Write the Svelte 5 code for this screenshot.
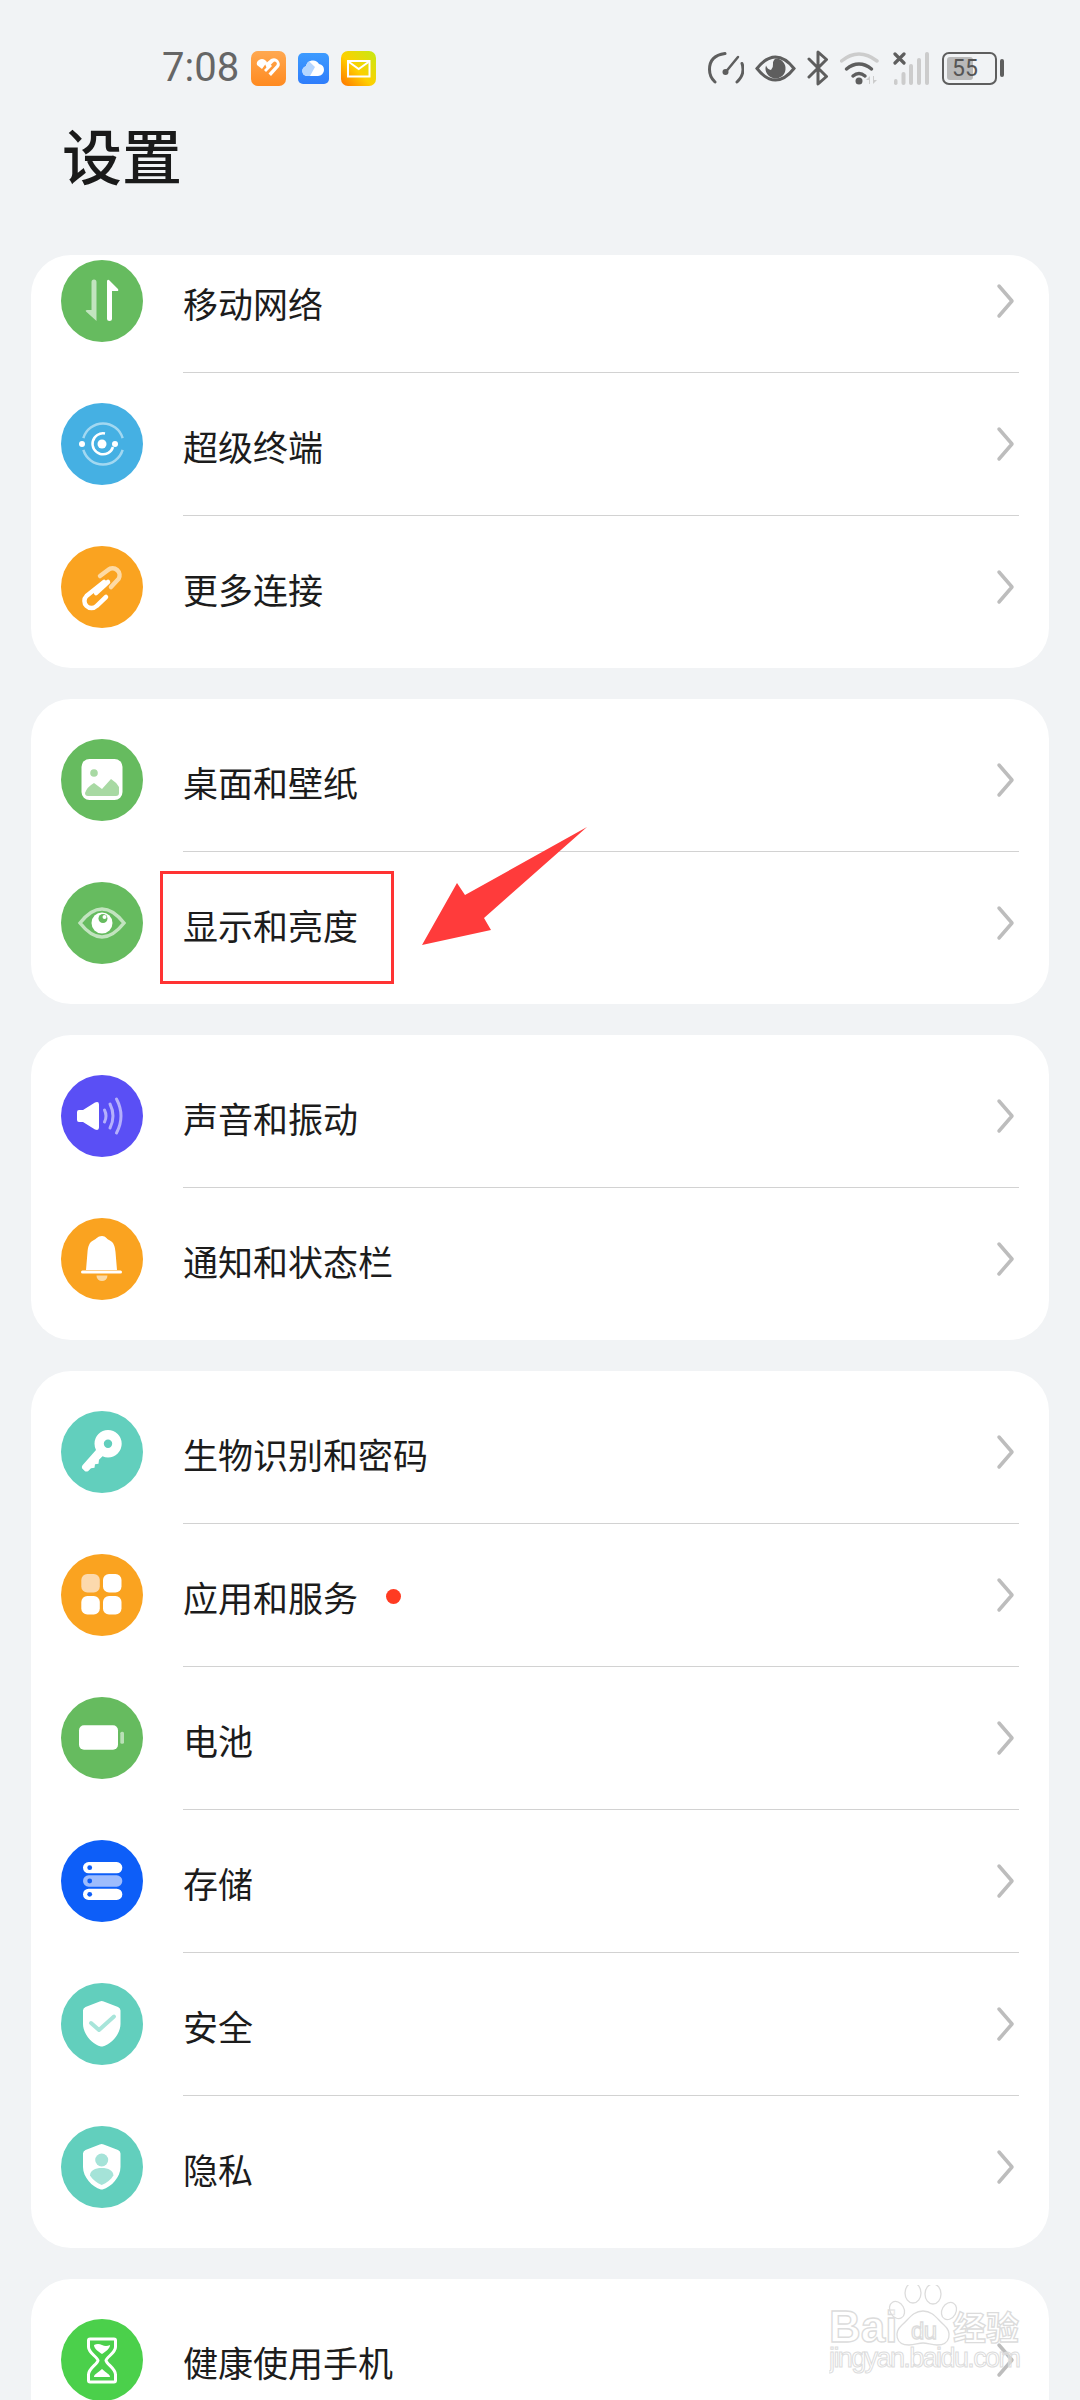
<script lang="ts">
    const green = "#66bb5f";
    const teal = "#62cfbd";
    const orange = "#faa320";

    const groups = [
        [
            { label: "移动网络", icon: "mobile", color: green },
            { label: "超级终端", icon: "terminal", color: "#45b0e3" },
            { label: "更多连接", icon: "link", color: orange },
        ],
        [
            { label: "桌面和壁纸", icon: "wallpaper", color: green },
            { label: "显示和亮度", icon: "eye", color: green },
        ],
        [
            { label: "声音和振动", icon: "sound", color: "#5a4ff5" },
            { label: "通知和状态栏", icon: "bell", color: orange },
        ],
        [
            { label: "生物识别和密码", icon: "key", color: teal },
            { label: "应用和服务", icon: "apps", color: orange, dot: true },
            { label: "电池", icon: "battery", color: green },
            { label: "存储", icon: "storage", color: "#0d5ef8" },
            { label: "安全", icon: "shield", color: teal },
            { label: "隐私", icon: "privacy", color: teal },
        ],
        [{ label: "健康使用手机", icon: "hourglass", color: "#4bd04b" }],
    ];
</script>

{#snippet glyph(name: string, color: string)}
    <svg class="glyph" viewBox="0 0 82 82">
        {#if name === "mobile"}
            <path d="M30.5 22q0-2.500 2.500-2.500t2.500 2.500V61L25 51.500q-1-1.500 1-1.500h4.500z" fill="#fff" opacity=".6" />
            <path d="M46 21.500q0-2.500 2-1.500l9 9q1 2-1 2h-5v28q0 2-2.500 2T46 59z" fill="#fff" />
        {:else if name === "terminal"}
            <circle cx="42" cy="41" r="20.500" fill="none" stroke="#fff" stroke-opacity=".5" stroke-width="2.500" stroke-dasharray="52 12 52 12" stroke-dashoffset="-6" />
            <path d="M44 30.500A10.500 10.500 0 1 0 52 44" fill="none" stroke="#fff" stroke-width="2.500" />
            <circle cx="41" cy="41" r="4.500" fill="#fff" />
            <circle cx="21" cy="41" r="3" fill="#fff" />
            <circle cx="54" cy="41" r="3" fill="#fff" />
        {:else if name === "link"}
            <path d="M43 36 25.500 50a7 7 0 0 0 10 10L45 51" fill="none" stroke="#fff" stroke-width="4.500" stroke-linecap="round" />
            <path d="M39 30l8-6a7 7 0 0 1 10.500 9L50 41" fill="none" stroke="#fff" stroke-opacity=".6" stroke-width="4.500" stroke-linecap="round" />
            <path d="M35 47 47 36" fill="none" stroke="#fff" stroke-width="4.500" stroke-linecap="round" />
        {:else if name === "wallpaper"}
            <rect x="20.500" y="20" width="41" height="41" rx="8" fill="#fff" />
            <circle cx="33" cy="34" r="3.800" fill="#a8d9a3" />
            <path d="M24 54q2-6 9-10l8 6 9-10q5 3 8 8v6q0 3-3 3H27q-3 0-3-3z" fill="#a8d9a3" />
        {:else if name === "eye"}
            <path d="M19 41Q30 27 41 27T63 41Q52 55 41 55T19 41z" fill="none" stroke="#fff" stroke-opacity=".6" stroke-width="3.500" />
            <circle cx="41" cy="41" r="10.500" fill="#fff" />
            <circle cx="42" cy="36.500" r="4.500" fill={color} />
            <circle cx="43.500" cy="35" r="2" fill="#fff" />
        {:else if name === "sound"}
            <path d="M16 37q0-2 2-2h4l12-7.500q4-1.500 4 2v23q0 3.500-4 2L22 47h-4q-2 0-2-2z" fill="#fff" />
            <path d="M43.500 35q3 6 0 12M49 29q6 12 0 24M55.500 24q9 17 0 34" fill="none" stroke="#b5b0fb" stroke-width="3" stroke-linecap="round" />
        {:else if name === "bell"}
            <path d="M41 18c4 0 4.500 3 7 4 5 2 6 7 6.500 12l1.500 18H25l1.500-18c.5-5 1.500-10 6.500-12 2.500-1 3.500-4 8-4z" fill="#fff" />
            <rect x="20" y="52.500" width="41" height="3" rx="1.500" fill="#fff" />
            <path d="M35.500 57.500h11a5.500 5.500 0 0 1-11 0z" fill="#fbd9a4" />
        {:else if name === "key"}
            <path fill-rule="evenodd" d="M47 19a13.700 13.700 0 1 1 0 27.400 13.700 13.700 0 0 1-5.500-1.200L38 48.700l-.5 4-3.500.5-.5 3.500-3.500.5-3 3q-2 .5-3 0l-3-3q-.5-1.500.5-3L35 39q-1.500-3-1.500-6.300A13.700 13.700 0 0 1 47 19zm0 9.500a4.200 4.200 0 1 0 0 8.400 4.200 4.200 0 0 0 0-8.400z" fill="#fff" />
        {:else if name === "apps"}
            <rect x="20.300" y="20" width="18.500" height="18.500" rx="6" fill="#fcd9ad" />
            <rect x="42" y="20" width="18.500" height="18.500" rx="6" fill="#fff" />
            <rect x="20.300" y="42" width="18.500" height="18.500" rx="6" fill="#fff" />
            <rect x="42" y="42" width="18.500" height="18.500" rx="6" fill="#fff" />
        {:else if name === "battery"}
            <rect x="18" y="28.300" width="39" height="24.500" rx="5" fill="#fff" />
            <rect x="59.300" y="34.700" width="3.700" height="12" rx="1.500" fill="#fff" opacity=".55" />
        {:else if name === "storage"}
            <rect x="22" y="22" width="39.300" height="11.300" rx="5.600" fill="#fff" />
            <rect x="22" y="35.300" width="39.300" height="11.400" rx="5.600" fill="#9dbcfd" />
            <rect x="22" y="48.700" width="39.300" height="11.300" rx="5.600" fill="#fff" />
            <circle cx="28.700" cy="27.700" r="2.400" fill={color} />
            <circle cx="28.700" cy="41" r="2.400" fill={color} />
            <circle cx="28.700" cy="54.300" r="2.400" fill={color} />
        {:else if name === "shield"}
            <path d="M40.700 18q1 0 2 .5L57 24q2.500 1 2.500 3.500V41c0 10-9 20-18 22.500h-1.600C31 61 22 51 22 41V27.500q0-2.500 2.500-3.500L38.700 18.500q1-.5 2-.5z" fill="#fff" />
            <path d="M30 40l8 7 15-13.500" fill="none" stroke="#a8e5da" stroke-width="4" stroke-linecap="round" stroke-linejoin="round" />
        {:else if name === "privacy"}
            <path d="M40.700 18q1 0 2 .5L57 24q2.500 1 2.500 3.500V41c0 10-9 20-18 22.500h-1.600C31 61 22 51 22 41V27.500q0-2.500 2.500-3.500L38.700 18.500q1-.5 2-.5z" fill="#fff" />
            <circle cx="40.700" cy="34" r="6.500" fill="#a5e3d8" />
            <path d="M29 49.500c0-5 5-7.500 11.700-7.500s11.700 2.500 11.700 7.500c-2.500 4-6.500 7.500-11.700 9.500-5-2-9-5.500-11.700-9.500z" fill="#a5e3d8" />
        {:else if name === "hourglass"}
            <path d="M29 20h24q1.500 0 1.500 1.500V28c0 6-9 10-9.500 13.500.5 3.500 9.500 8 9.500 14v6q0 1.500-1.500 1.500H29q-1.500 0-1.500-1.500v-6c0-6 9-10.500 9.500-14C36.500 38 27.500 34 27.500 28v-6.500Q27.500 20 29 20z" fill="none" stroke="#fff" stroke-width="3" />
            <path d="M33 26q4-2 8 0t8 0c0 4-5 7-8 9-3-2-8-5-8-9zM33 58c0-3 4-4 8-8 4 4 8 5 8 8z" fill="#fff" />
        {/if}
    </svg>
{/snippet}

<div class="page">
    <div class="status">
        <div class="status-left">
            <span class="time">7:08</span>
            <svg class="notif" viewBox="0 0 35 35">
                <defs><linearGradient id="oa" x1="0" y1="0" x2="0" y2="1"><stop offset="0" stop-color="#ffa850" /><stop offset="1" stop-color="#ff8a20" /></linearGradient></defs>
                <rect width="35" height="35" rx="7" fill="url(#oa)" />
                <path d="M6 14q-1-3 2-5 3-2 6 0l2 2-5 7zM14 13l6-5q4-2 7 1 3 4 1 7l-8 9-2.500-2.500 8-8.500q1-2-.5-3t-3 .5l-6 6z" fill="#fff" />
                <path d="M13 19l6-6 2 2-6 6z" fill="#fff" />
            </svg>
            <svg class="notif small" viewBox="0 0 31 31">
                <defs><linearGradient id="ba" x1="0" y1="0" x2="0" y2="1"><stop offset="0" stop-color="#3d9bff" /><stop offset="1" stop-color="#2f7dfb" /></linearGradient></defs>
                <rect width="31" height="31" rx="5" fill="url(#ba)" />
                <path d="M9 23a5 5 0 0 1-1-9.800 7 7 0 0 1 13-2.200 6 6 0 0 1 5 6 6 6 0 0 1-6 6z" fill="#fff" />
                <path d="M9 23a5 5 0 0 1-1-9.800 7 7 0 0 1 3-5L17 14l-5 9z" fill="#b5d6ff" />
            </svg>
            <svg class="notif" viewBox="0 0 35 35">
                <defs><linearGradient id="ya" x1="1" y1="0" x2="0" y2="1"><stop offset="0" stop-color="#c4ea14" /><stop offset=".55" stop-color="#ffcf00" /><stop offset="1" stop-color="#ff7200" /></linearGradient></defs>
                <rect width="35" height="35" rx="7" fill="url(#ya)" />
                <rect x="7" y="10" width="21.500" height="15.500" fill="none" stroke="#fff" stroke-width="2" />
                <path d="M8 11l9.700 7L27.500 11" fill="none" stroke="#fff" stroke-width="2" />
            </svg>
        </div>
        <div class="status-right">
            <svg class="si" width="36" height="32" viewBox="0 0 36 32" fill="none" stroke="#5e5e5e" stroke-width="3" stroke-linecap="round">
                <path d="M7 30Q1.500 25 1.500 17.500 1.500 3.500 17 1.500" />
                <path d="M34 11.500q1 2.500 1 6 0 7-6 12.500" />
                <path d="M30 5 18.500 19" stroke-width="2.500" />
                <circle cx="17.500" cy="20" r="3" fill="#5e5e5e" stroke="none" />
            </svg>
            <svg class="si" width="41" height="27" viewBox="0 0 41 27">
                <path d="M2 13.500Q11 2 20.500 2T39 13.500Q30 25 20.500 25T2 13.500z" fill="none" stroke="#5e5e5e" stroke-width="3" />
                <path d="M20.500 3.500a10 10 0 1 1-9.500 7q1.500 4 5 4.500 2.500-3 2-6t2.500-5.500z" fill="#5e5e5e" />
            </svg>
            <svg class="si" width="22" height="36" viewBox="0 0 22 36" fill="none" stroke="#5e5e5e" stroke-width="3" stroke-linecap="round" stroke-linejoin="round">
                <path d="M2 9l17.500 17.500L11 34V2l8.500 7.500L2 27" />
            </svg>
            <svg class="si" width="42" height="33" viewBox="0 0 42 33" fill="none" stroke-linecap="round">
                <path d="M1.500 9Q10 2 19 2t18 7" stroke="#ccc" stroke-width="3.500" />
                <path d="M6.500 17q6-5 12.500-5t12.500 5" stroke="#5e5e5e" stroke-width="3.500" />
                <path d="M13 24q3-2.500 6-2.500t6 2.500" stroke="#5e5e5e" stroke-width="3.500" />
                <circle cx="19" cy="29" r="3.500" fill="#5e5e5e" />
                <path d="M26 28l4-4v8h-1v-4zM33 24h1v4h3l-4 4z" fill="#ccc" />
            </svg>
            <svg class="si" width="36" height="33" viewBox="0 0 36 33">
                <g fill="#ccc">
                    <rect x="1" y="27" width="3.500" height="6" rx="1.700" />
                    <rect x="8.500" y="20" width="4" height="13" rx="2" />
                    <rect x="16" y="12" width="4" height="21" rx="2" />
                    <rect x="24" y="6" width="4" height="27" rx="2" />
                    <rect x="32" y="0" width="4" height="33" rx="2" />
                </g>
                <path d="M2 2l9 9M11 2l-9 9" stroke="#5e5e5e" stroke-width="3.200" stroke-linecap="round" />
            </svg>
            <div class="batt">
                <div class="batt-body">
                    <div class="batt-fill"></div>
                    <span class="batt-num">55</span>
                </div>
                <div class="batt-tip"></div>
            </div>
        </div>
    </div>

    <h1 class="title">设置</h1>

    <div class="groups">
        {#each groups as rows, g}
            <section class="card" class:scrolled={g === 0}>
                {#each rows as row, i}
                    <div class="row" class:first={i === 0}>
                        <div class="circle" style="background: {row.color}">
                            {@render glyph(row.icon, row.color)}
                        </div>
                        <div class="body">
                            <span class="label">{row.label}</span>
                            {#if row.dot}<span class="dot"></span>{/if}
                            <svg class="chev" width="19" height="36" viewBox="0 0 19 36">
                                <path d="M3 3l13 15L3 33" fill="none" stroke="#bdbdbd" stroke-width="3.500" stroke-linecap="round" stroke-linejoin="round" />
                            </svg>
                        </div>
                    </div>
                {/each}
            </section>
        {/each}
    </div>

    <!-- annotation drawn on top of the screenshot -->
    <div class="mark"></div>
    <svg class="arrow" width="180" height="130" viewBox="0 0 180 130">
        <path d="M2 118 37 56 45 68 167 0 64 91 71 103z" fill="#ff3b3b" />
    </svg>

    <svg class="wm" width="200" height="90" viewBox="0 0 200 90">
        <g fill="#fff" fill-opacity=".35" stroke="#dcdcdc" stroke-width="1.300">
            <text x="0" y="57" font-family="Liberation Sans, sans-serif" font-weight="700" font-size="44">Bai</text>
            <ellipse cx="84" cy="8" rx="8" ry="10" />
            <ellipse cx="104" cy="9" rx="8" ry="10" />
            <ellipse cx="68" cy="25" rx="7" ry="9" transform="rotate(-30 68 25)" />
            <ellipse cx="120" cy="26" rx="7" ry="9" transform="rotate(30 120 26)" />
            <path d="M94 26c10 0 14 8 21 14 8 7 7 20-7 20-6 0-9-2-14-2s-8 2-14 2c-14 0-15-13-7-20 7-6 11-14 21-14z" />
            <text x="82" y="54" font-family="Liberation Sans, sans-serif" font-size="24" textLength="26">du</text>
            <text x="124" y="55" font-family="Noto Sans CJK SC, sans-serif" font-weight="700" font-size="33">经验</text>
            <text x="0" y="82" font-family="Liberation Sans, sans-serif" font-size="27" stroke-width="1" textLength="192">jingyan.baidu.com</text>
        </g>
    </svg>
</div>

<style>
    :global(body) {
        margin: 0;
    }

    .page {
        position: relative;
        height: 2400px;
        overflow: hidden;
        background: #f1f3f5;
        font-family: "Noto Sans CJK SC", "Noto Sans", sans-serif;
    }

    .status {
        display: flex;
        justify-content: space-between;
        align-items: center;
        height: 36px;
        padding: 50px 76px 0 162px;
    }

    .status-left,
    .status-right {
        display: flex;
        align-items: center;
    }

    .status-left {
        gap: 12px;
    }

    .status-right {
        gap: 11px;
    }

    .time {
        font-family: Roboto, sans-serif;
        font-size: 40px;
        line-height: 36px;
        color: #666;
    }

    .notif {
        width: 35px;
        height: 35px;
    }

    .notif.small {
        width: 31px;
        height: 31px;
    }

    .si {
        display: block;
    }

    .batt {
        display: flex;
        align-items: center;
        gap: 3px;
        margin-left: 2px;
    }

    .batt-body {
        position: relative;
        display: flex;
        justify-content: center;
        align-items: center;
        box-sizing: border-box;
        width: 55px;
        height: 33px;
        border: 2.5px solid #5e5e5e;
        border-radius: 7px;
    }

    .batt-fill {
        position: absolute;
        left: 3px;
        top: 3px;
        bottom: 3px;
        width: 26px;
        border-radius: 3px;
        background: #b9b9b9;
    }

    .batt-num {
        position: relative;
        margin-right: 9px;
        font-family: Roboto, sans-serif;
        font-size: 23px;
        line-height: 1;
        color: #555;
    }

    .batt-tip {
        width: 4px;
        height: 18px;
        border-radius: 2px;
        background: #5e5e5e;
    }

    .title {
        margin: 0;
        padding: 28px 0 0 62px;
        height: 141px;
        box-sizing: border-box;
        font-size: 60px;
        line-height: 80px;
        font-weight: 500;
        color: #1a1a1a;
    }

    .groups {
        display: flex;
        flex-direction: column;
        gap: 31px;
        padding: 0 31px;
        margin-top: 28px;
    }

    .card {
        overflow: hidden;
        padding: 9px 0 10px;
        border-radius: 40px;
        background: #fff;
    }

    .card.scrolled {
        padding-top: 0;
    }

    .card.scrolled .row.first {
        margin-top: -26px;
    }

    .row {
        display: flex;
        align-items: center;
        gap: 40px;
        height: 143px;
        padding-left: 30px;
    }

    .circle {
        flex: none;
        width: 82px;
        height: 82px;
        border-radius: 50%;
    }

    .glyph {
        display: block;
        width: 82px;
        height: 82px;
    }

    .body {
        flex: 1;
        display: flex;
        align-items: center;
        align-self: stretch;
        margin-right: 30px;
        border-top: 1.5px solid #d2d2d2;
    }

    .row.first .body {
        border-top-color: transparent;
    }

    .label {
        padding-top: 3px;
        font-size: 35px;
        line-height: 48px;
        color: #1c1c1c;
    }

    .dot {
        width: 15px;
        height: 15px;
        margin-left: 28px;
        margin-top: 3px;
        border-radius: 50%;
        background: #ff3b22;
    }

    .chev {
        margin-left: auto;
        margin-right: 4px;
    }

    .mark {
        position: absolute;
        left: 160px;
        top: 871px;
        width: 234px;
        height: 113px;
        box-sizing: border-box;
        border: 3px solid #f33;
    }

    .arrow {
        position: absolute;
        left: 420px;
        top: 827px;
    }

    .wm {
        position: absolute;
        left: 829px;
        top: 2285px;
    }
</style>
